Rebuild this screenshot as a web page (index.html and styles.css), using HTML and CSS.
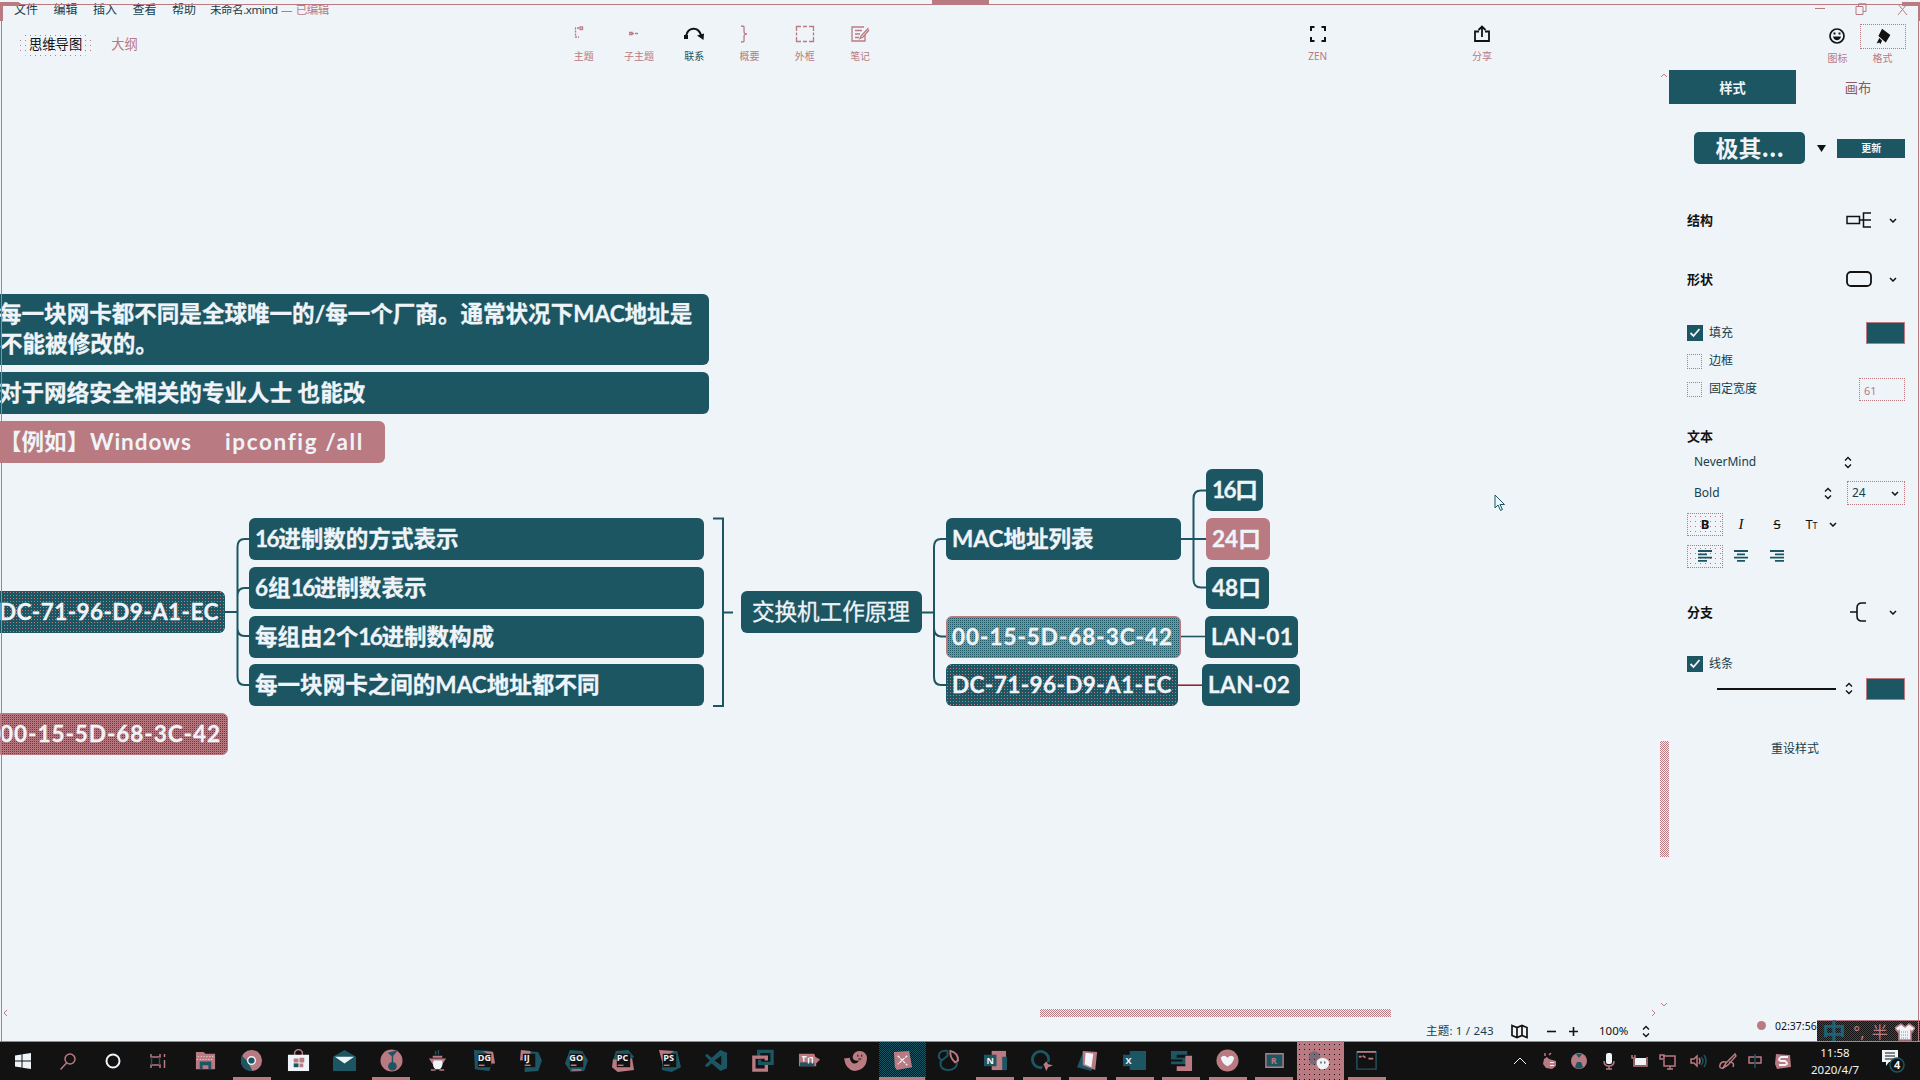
FILE: index.html
```html
<!DOCTYPE html>
<html lang="zh-CN">
<head>
<meta charset="utf-8">
<title>未命名.xmind</title>
<link rel="stylesheet" href="styles.css">
</head>
<body>
<svg class="defs" width="0" height="0">
  <defs>
    <symbol id="chev" viewBox="0 0 8 5"><path d="M1 1l3 3 3-3" fill="none" stroke="#121212" stroke-width="1.5"/></symbol>
    <symbol id="updown" viewBox="0 0 8 13"><path d="M1 4.5l3-3 3 3M1 8.5l3 3 3-3" fill="none" stroke="#121212" stroke-width="1.4"/></symbol>
    <symbol id="check" viewBox="0 0 16 16"><path d="M3.5 8l3 3 6-7" fill="none" stroke="#eff4f9" stroke-width="1.8"/></symbol>
  </defs>
</svg>

<header class="menubar">
  <nav class="menus"><span>文件</span><span>编辑</span><span>插入</span><span>查看</span><span>帮助</span></nav>
  <div class="doc">未命名.xmind <em>— 已编辑</em></div>
  <div class="winbtns">
    <svg width="10" height="10" viewBox="0 0 10 10"><path d="M0 4.500h10"/></svg>
    <svg width="12" height="12" viewBox="0 0 12 12"><path d="M1 3.500h7v8H1zM3.500 3V.8H11v7.700H8"/></svg>
    <svg width="11" height="11" viewBox="0 0 11 11"><path d="M1 0l9 11M10 0L1 11"/></svg>
  </div>
</header>

<div class="toolbar">
  <div class="views"><span class="view on">思维导图</span><span class="view">大纲</span></div>
  <div class="tools">
    <div class="tool"><svg class="g1" width="20" height="18" viewBox="0 0 20 18"><path d="M5 3H1.500v9H5" stroke-dasharray="2 1"/><rect x="6" y="2" width="2.500" height="2.500"/></svg>主题</div>
    <div class="tool"><svg width="20" height="18" viewBox="0 0 20 18"><path d="M0 7.500h3v2H0zM3 8.500h2M6 8.500h3"/></svg>子主题</div>
    <div class="tool live"><svg width="22" height="18" viewBox="0 0 22 18"><path d="M3 11C5 2 15 1 18 10" stroke-width="2"/><path class="f" d="M1 10h4v4H1zM14 10.500l7-2-.500 6.500z"/></svg>联系</div>
    <div class="tool"><svg width="20" height="18" viewBox="0 0 20 18"><path d="M1 1c4 0 3 1 3 4s0 4 3 4c-3 0-3 1-3 4s1 4-3 4"/></svg>概要</div>
    <div class="tool"><svg width="20" height="18" viewBox="0 0 20 18"><path d="M1.500 6V1.500H6M8 1.500h4M14 1.500h4.500V6M18.500 7.500v3M18.500 12v4.500H14M12 16.500H8M6 16.500H1.500V12M1.500 10.500v-3"/></svg>外框</div>
    <div class="tool"><svg width="20" height="18" viewBox="0 0 20 18"><path d="M14 2H2v14h13v-6M5 5.500h7M5 9h5M5 12.500h4M18.500 3L11 11l-1 2.500 3-1.500 6-7"/></svg>笔记</div>
  </div>
  <div class="tool zen"><svg width="18" height="18" viewBox="0 0 18 18"><path d="M2 6V2h3.500M12.500 2H16v4M16 12v4h-3.500M5.500 16H2v-4" stroke-width="2"/></svg>ZEN</div>
  <div class="tool share"><svg width="18" height="18" viewBox="0 0 18 18"><path d="M6 6.500H2V16h14V6.500h-4" stroke-width="1.800"/><path d="M9 12V2M5.500 5L9 1.500 12.500 5" stroke-width="1.800"/></svg>分享</div>
  <div class="tool emo"><svg width="18" height="18" viewBox="0 0 18 18"><circle cx="8" cy="9" r="7" stroke-width="1.700"/><path class="f" d="M4.500 5.500h2v2h-2zM9.500 5.500h2v2h-2zM4 9.500h8c-1 5-7 5-8 0z"/></svg>图标</div>
  <div class="tool fmt"><svg width="46" height="25" viewBox="0 0 46 25"><path class="f" d="M22 4l9 7-5 8-8-7zM19 14l3 3-2 4-1-2-3 1z"/></svg>格式</div>
</div>

<main>
  <section class="canvas">
    <svg class="links" width="1669" height="952" viewBox="0 68 1669 952">
      <g fill="none" stroke="#1c5663" stroke-width="2">
        <path d="M224 612h13M249.500 539h-5q-7 0-7 8v130q0 8 7 8h5M237.500 596q0-8 7-8h5M237.500 628q0 8 7 8h5"/>
        <path d="M713 518.500h10v187.500h-10M723 612.500h10"/>
        <path d="M921 612.500h13M946 539h-5q-7 0-7 8v130q0 8 7 8h5M934 628q0 8 7 8.500h5"/>
        <path d="M1181 539h25M1206 490.500h-5q-7.500 0-7.500 8v81q0 8 7.500 8h5"/>
      </g>
      <g fill="none" stroke="#ba7a82" stroke-width="2"><path d="M1181 636.500h24M1178 685h24"/></g>
      <path d="M1181 636.500h24M1178 685.500h24" stroke="#1c5663"/>
    </svg>
    <div class="node big" style="left:0;top:226px;width:709px;height:71px">每一块网卡都不同是全球唯一的/每一个厂商。通常状况下MAC地址是<br>不能被修改的。</div>
    <div class="node edge" style="left:0;top:304px;width:709px">对于网络安全相关的专业人士 也能改</div>
    <div class="node edge pink eg" style="left:0;top:353px;width:385px"><span class="w0">【例如】</span><span class="w1">Windows</span><span class="w2">ipconfig /all</span></div>
    <div class="node edge dots" style="left:0;top:523px;width:225px">DC-71-96-D9-A1-EC</div>
    <div class="node edge mesh" style="left:0;top:645px;width:228px">00-15-5D-68-3C-42</div>
    <div class="node" style="left:249px;top:450px;width:455px"><i>16</i>进制数的方式表示</div>
    <div class="node" style="left:249px;top:499px;width:455px">6组<i>16</i>进制数表示</div>
    <div class="node" style="left:249px;top:548px;width:455px">每组由2个<i>16</i>进制数构成</div>
    <div class="node" style="left:249px;top:596px;width:455px">每一块网卡之间的MAC地址都不同</div>
    <div class="node sum" style="left:741px;top:523px;width:181px">交换机工作原理</div>
    <div class="node" style="left:946px;top:450px;width:235px">MAC地址列表</div>
    <div class="node mesh" style="left:946px;top:548px;width:235px">00-15-5D-68-3C-42</div>
    <div class="node dots" style="left:946px;top:596px;width:232px">DC-71-96-D9-A1-EC</div>
    <div class="node" style="left:1206px;top:401px;width:57px"><i>16</i>口</div>
    <div class="node pink" style="left:1206px;top:450px;width:64px">24口</div>
    <div class="node" style="left:1206px;top:499px;width:63px">48口</div>
    <div class="node lan" style="left:1205px;top:548px;width:93px">LAN-01</div>
    <div class="node lan" style="left:1202px;top:596px;width:98px">LAN-02</div>
    <div class="vbar"></div><div class="hbar"></div>
    <svg class="arrows" width="1669" height="952" viewBox="0 68 1669 952" fill="none" stroke="#ba7a82"><path d="M7 1010l-3 3 3 3M1652 1010l3 3-3 3M1661 1003l3 3 3-3M1661 77l3-3 3 3"/></svg>
    <svg class="cursor" width="12" height="18" viewBox="0 0 12 18"><path d="M1 1v13l3-3 2.500 5.500 2-1L6 10.500h4.500z" fill="#eff4f9" stroke="#1c5663"/></svg>
  </section>

  <aside class="panel">
    <div class="tabs"><div class="tab on">样式</div><div class="tab">画布</div></div>
    <div class="row preset"><div class="chip">极其...</div><svg class="tri" width="9" height="7" viewBox="0 0 9 7"><path d="M0 0h9L4.500 7z" fill="#121212"/></svg><div class="update">更新</div></div>
    <div class="row struct"><b>结构</b><svg class="r" width="26" height="18" viewBox="0 0 26 18" fill="none" stroke="#121212" stroke-width="1.500"><path d="M1 5.500h12.500v7H1zM13.500 9H25M25 2h-7.500v14H25"/></svg><svg class="ch" width="8" height="5"><use href="#chev"/></svg></div>
    <div class="row shape"><b>形状</b><svg class="r" width="26" height="16" viewBox="0 0 26 16"><rect x="1" y="1" width="24" height="14" rx="4" fill="none" stroke="#121212" stroke-width="1.800"/></svg><svg class="ch" width="8" height="5"><use href="#chev"/></svg></div>
    <div class="row fill"><span class="cb on"><svg width="16" height="16"><use href="#check"/></svg></span>填充<span class="sw"></span></div>
    <div class="row near"><span class="cb"></span>边框</div>
    <div class="row near"><span class="cb"></span>固定宽度<span class="num">61</span></div>
    <div class="row texth"><b>文本</b></div>
    <div class="row font"><span>NeverMind</span><svg class="ud far" width="8" height="13"><use href="#updown"/></svg></div>
    <div class="row weight"><span>Bold</span><svg class="ud" width="8" height="13"><use href="#updown"/></svg><span class="size">24<svg width="8" height="5"><use href="#chev"/></svg></span></div>
    <div class="row btns"><span class="bt on"><b>B</b></span><span class="bt it">I</span><span class="bt"><s>S</s></span><span class="bt tt">T<small>T</small></span><svg class="ttc" width="8" height="5"><use href="#chev"/></svg></div>
    <div class="row btns al"><span class="bt on"><svg width="14" height="12" viewBox="0 0 14 12"><path d="M0 1h14M0 4.300h9M0 7.600h14M0 10.800h9"/></svg></span><span class="bt"><svg width="14" height="12" viewBox="0 0 14 12"><path d="M0 1h14M3 4.300h8M0 7.600h14M3 10.800h8"/></svg></span><span class="bt"><svg width="14" height="12" viewBox="0 0 14 12"><path d="M0 1h14M5 4.300h9M0 7.600h14M5 10.800h9"/></svg></span></div>
    <div class="row branch"><b>分支</b><svg class="r" width="17" height="20" viewBox="0 0 17 20"><path d="M0 10h7M16 1h-4q-5 0-5 5v8q0 5 5 5h4" fill="none" stroke="#121212" stroke-width="1.600"/></svg><svg class="ch" width="8" height="5"><use href="#chev"/></svg></div>
    <div class="row line"><span class="cb on"><svg width="16" height="16"><use href="#check"/></svg></span>线条</div>
    <div class="row stroke"><span class="rule"></span><svg width="8" height="13"><use href="#updown"/></svg><span class="sw dk"></span></div>
    <div class="row reset">重设样式</div>
  </aside>
</main>

<footer class="status">
  <span class="count">主题: 1 / 243</span>
  <svg class="map" width="17" height="15" viewBox="0 0 17 15" fill="none" stroke="#121212" stroke-width="1.700"><path d="M1 1.500l5 2 5-2 5 2v10l-5-2-5 2-5-2zM6 3.500v10M11 1.500v10"/></svg>
  <svg class="minus" width="9" height="9" viewBox="0 0 9 9"><path d="M0 4.500h9" stroke="#121212" stroke-width="1.600"/></svg>
  <svg class="plus" width="9" height="9" viewBox="0 0 9 9"><path d="M0 4.500h9M4.500 0v9" stroke="#121212" stroke-width="1.600"/></svg>
  <span class="pct">100%</span>
  <svg class="zud" width="8" height="13"><use href="#updown"/></svg>
  <span class="rec"></span><span class="time">02:37:56</span>
  <div class="ime"><b>中</b><span>°,</span><span>半</span><svg width="20" height="18" viewBox="0 0 20 18"><path d="M6 1l4 3 4-3 6 4-3 4-1-1v9H4V8L3 9 0 5z" fill="#eff4f9" stroke="#ba7a82" stroke-width="1.500"/><path d="M6 9h8M6 12h8M6 15h8" stroke="#ba7a82" stroke-dasharray="1 1"/></svg></div>
</footer>

<div class="taskbar">
  <div class="sys"><svg width="16" height="16" viewBox="0 0 16 16"><path class="l" d="M0 2.500L6.500 1.500v6H0zM7.500 1.300L16 0v7.500H7.500zM0 8.500h6.500v6L0 13.500zM7.500 8.500H16V16l-8.500-1.300z"/></svg></div>
  <div class="sys"><svg width="16" height="17" viewBox="0 0 16 17"><circle cx="10" cy="6" r="5" class="sp"/><path class="sp" d="M6.500 10L.5 16.500"/></svg></div>
  <div class="sys"><svg width="16" height="16" viewBox="0 0 16 16"><circle cx="8" cy="8" r="6.500" fill="none" stroke="#eff4f9" stroke-width="2"/></svg></div>
  <div class="sys"><svg width="16" height="16" viewBox="0 0 16 16"><path class="sp" d="M1 1v3h9V1M1 15v-3h9v3M14.500 1v3M14.500 7v8"/><path class="st" d="M1.500 4v8M9.500 4v8"/></svg></div>
  <div class="app first"><svg viewBox="0 0 24 24"><path class="p" d="M2 3h8l2 2h10v16H2z"/><path class="t" d="M6 13h12v8h-3v-4H9v4H6z"/><path d="M4 8h18M3 11h18" stroke="#eff4f9" stroke-dasharray="1 2"/></svg></div>
  <div class="app run"><svg viewBox="0 0 24 24"><circle cx="12" cy="12" r="11" class="p"/><path class="t" d="M2 7l6 6 5 10C3 23-1 15 2 7z"/><circle cx="12" cy="12" r="4" class="t" stroke="#eff4f9" stroke-width="1.500"/></svg></div>
  <div class="app"><svg viewBox="0 0 24 24"><path class="sp" d="M8 7V3q4-5 8 0v4"/><path class="l" d="M1 6h22v17H1z"/><path class="p" d="M7 10h5v4H7zM13 9h5v5h-5zM13 15h4v4h-4z"/><path class="t" d="M7 15h5v4H7z"/></svg></div>
  <div class="app"><svg viewBox="0 0 24 24"><path class="t" d="M0 8L12 1l12 7v15H0z"/><path class="l" d="M2 8h20l-10 7z"/></svg></div>
  <div class="app run"><svg viewBox="0 0 24 24"><circle cx="12" cy="12" r="11.500" class="p"/><path class="t" d="M8 4l11-3-6 7z"/><path d="M13 7v8" stroke="#1c5663" stroke-width="1.500"/><circle cx="13" cy="18" r="4.500" class="t"/></svg></div>
  <div class="app"><svg viewBox="0 0 24 24"><path class="st" d="M10 2v4M13 1v5"/><path class="p" d="M7 7h10v2H7zM3 10h18l-4 6H7z"/><path class="l" d="M8 12h9q1 8-3 9h-4q-4-2-2-9z"/><path class="sp" d="M5 22h5M14 22h5"/></svg></div>
  <div class="app"><svg viewBox="0 0 24 24"><path class="t" d="M1 1l19 1v13l-3 8L2 21z"/><path class="p" d="M10 2l11 1 2 12h-5L17 6z"/><path class="k" d="M5 5h14v14H5z"/><text x="5" y="13">DG</text><path class="sp" d="M6 17h6"/></svg></div>
  <div class="app"><svg viewBox="0 0 24 24"><path class="t" d="M5 2l15 1 4 9-4 11-14 1z"/><path class="p" d="M2 1l10 1v9L1 12z"/><path class="k" d="M4 5h13v14H4z"/><text x="5" y="13">IJ</text><path class="sp" d="M6 17h6"/></svg></div>
  <div class="app"><svg viewBox="0 0 24 24"><path class="t" d="M5 1l13 1 6 10-4 11-14 1-6-9z"/><path class="k" d="M5 5h14v14H5z"/><text x="4.500" y="13">GO</text><path class="sp" d="M6 17h6M7 22h10"/></svg></div>
  <div class="app"><svg viewBox="0 0 24 24"><path class="t" d="M4 2l13-1 6 7-5 5L1 12z"/><path class="p" d="M1 11l20-1 2 12-17 2-6-5z"/><path class="k" d="M5 5h14v14H5z"/><text x="5" y="13">PC</text><path class="sp" d="M6 17h6"/></svg></div>
  <div class="app"><svg viewBox="0 0 24 24"><path class="t" d="M5 3l15-1 4 17-10 5-10-2z"/><path class="p" d="M1 1l16 1-8 5-4 9z"/><path class="k" d="M5 5h14v14H5z"/><text x="5.500" y="13">PS</text><path class="sp" d="M6 17h6"/></svg></div>
  <div class="app"><svg viewBox="0 0 24 24"><path class="t" d="M16 1l7 3v16l-7 3-9-8-5 4-2-2 5-5-5-5 2-2 5 4zM17 7l-7 5 7 5z" fill-rule="evenodd"/></svg></div>
  <div class="app"><svg viewBox="0 0 24 24" fill="none" stroke-width="3.500"><path stroke="#ba7a82" d="M9 8.500H3V22h13v-6"/><path stroke="#1c5663" d="M8 7V2.500h14v12.500H9v-4"/><path stroke="#ba7a82" d="M7 8.500h9V12"/></svg></div>
  <div class="app"><svg viewBox="0 0 24 24"><path class="p" d="M1 5h16l1 3 5 3-4 4v3H1z"/><path class="t" d="M2 14h15v4H2z"/><path d="M4 8h5M6 8v5M11 9v6M12 9h3v6" fill="none" stroke="#eff4f9" stroke-width="1.500"/></svg></div>
  <div class="app"><svg viewBox="0 0 24 24"><path class="p" d="M0 10l6-1q1 6 5 6 3 0 5-3-7 1-7-4 1-6 8-6 7 1 7 8-1 12-13 13Q2 22 0 10z"/><path class="k" d="M14 6h1v2h-1zM18 6h1v2h-1zM15 10h3v1h-3z"/></svg></div>
  <div class="app run act"><svg viewBox="0 0 24 24"><path class="p" d="M3 3l16-1 3 17-16 3L4 19z"/><path d="M7 7l10 10M17 7L7 16" fill="none" stroke="#eff4f9" stroke-width="1.300" stroke-dasharray="3 1"/></svg></div>
  <div class="app"><svg viewBox="0 0 24 24" fill="none" stroke-width="2"><path stroke="#1c5663" d="M11 2Q1 1 2 9l3 3 6-5zM4 12q-2 10 8 10 9-1 9-8"/><path stroke="#ba7a82" d="M14 2q8 2 8 10l-3 2q-6-5-5-12z"/></svg></div>
  <div class="app run"><svg viewBox="0 0 24 24"><path class="p" d="M8 2h15v20H8z"/><path class="t" d="M19 8h5v14h-5zM0 6h13v12H0z"/><text x="2.500" y="15.500">N</text></svg></div>
  <div class="app run"><svg viewBox="0 0 24 24"><circle cx="11" cy="11" r="8.500" fill="none" stroke="#1c5663" stroke-width="3"/><path class="k" d="M13 14h11v10H13z"/><path class="p" d="M14 16l3-3 2 3 5 1-5 2-2 4z"/></svg></div>
  <div class="app run"><svg viewBox="0 0 24 24"><path class="t" d="M6 4L0 19l15 4 5-14z"/><path class="p" d="M6 2l15 1-2 19-13-5z"/><path class="l" d="M9 4l8 1-2 14-7-3z"/></svg></div>
  <div class="app run"><svg viewBox="0 0 24 24"><path class="t" d="M7 2h17v20H7zM0 6h13v12H0z"/><text x="2.500" y="15.500">X</text></svg></div>
  <div class="app run"><svg viewBox="0 0 24 24"><path class="t" d="M1 2h17v4H7v3h11v7H1v-3h12v-2H1z"/><path class="p" d="M16 7h7v16H7v-5h9z"/></svg></div>
  <div class="app run"><svg viewBox="0 0 24 24"><circle cx="12" cy="12" r="11.500" class="p"/><path class="l" d="M5 9q3-4 7 0 4-4 7 0-1 6-7 9-6-3-7-9z"/></svg></div>
  <div class="app run"><svg viewBox="0 0 24 24"><path class="t" d="M3 5h18v14H3z" stroke="#ba7a82" stroke-width="1.500"/><text class="pt" x="8" y="15.500">R</text></svg></div>
  <div class="app act pk"><svg viewBox="0 0 24 24"><path d="M0 5q5-6 11 0l1 6-6 6-4-1q-4-5-2-11z" fill="#1c5663" fill-opacity=".4"/><path class="l" d="M8 15q-1-5 6-6 7 1 7 6-1 6-7 6-5 0-6-6z"/><path class="k" d="M12 13h1v2h-1zM16 13h1v2h-1z"/></svg></div>
  <div class="app run"><svg viewBox="0 0 24 24"><path d="M2 3h20v18H2z" fill="none" stroke="#1c5663" stroke-width="1.500"/><path d="M2 3h20M4 8h3M8 7l3 2M14 10h5" fill="none" stroke="#ba7a82" stroke-width="1.800"/></svg></div>

  <div class="tray">
    <svg viewBox="0 0 18 18"><path d="M3 12l6-6 6 6" fill="none" stroke="#eff4f9"/></svg>
    <svg viewBox="0 0 18 18"><path class="p" d="M3 7l3-2 2 2 7 2v5l-4 3-6-1-3-4z"/><path class="sp" d="M4 1v3M8 3l2-2"/><path class="l" d="M9 10h4v1H9zM9 13h4v1H9z"/></svg>
    <svg viewBox="0 0 18 18"><circle class="p" cx="9" cy="9" r="8"/><path class="t" d="M6 2h6l-3 4zM7 10h4l2 5q-4 3-8 0z"/></svg>
    <svg viewBox="0 0 18 18"><rect class="l" x="6" y="1" width="6" height="11" rx="2"/><path class="sp" d="M4 9q0 5 5 5t5-5M9 14v3M6 17h6"/></svg>
    <svg viewBox="0 0 18 18"><path class="l" d="M5 6h11v7H5z"/><path class="sp" d="M2 3v3h3V3M4 7v7h13V5"/></svg>
    <svg viewBox="0 0 18 18"><path class="sp" d="M4 4h12v10H5V8M1 3h4v4H1zM8 17h6M11 14v3"/></svg>
    <svg viewBox="0 0 18 18"><path class="sp" d="M2 7h3l3-3v10l-3-3H2z"/><path class="sp" d="M10 6q2 3 0 6"/><path class="st" d="M12 5q4 4 0 8M15 3q4 6 0 12"/></svg>
    <svg viewBox="0 0 18 18"><path class="sp" d="M16 2l-9 9-3 5 5-3 8-9zM7 10q-5-1-6 3t4 3M10 10q6 0 4 5"/></svg>
    <svg viewBox="0 0 18 18" class="zh"><path class="sp" d="M3 5h12v6H3z"/><path class="st" d="M9 2v14"/></svg>
    <svg viewBox="0 0 18 18"><path class="p" d="M2 2l14 1 1 12-14 2-2-5z"/><path d="M14 5H7q-4 3 0 4h4q4 3 0 4H5" fill="none" stroke="#eff4f9" stroke-width="2"/></svg>
  </div>
  <div class="clock"><span>11:58</span><span>2020/4/7</span></div>
  <svg class="notif" width="26" height="24" viewBox="0 0 26 24"><path class="l" d="M1 1h16v12H8l-3 4v-4H1z"/><path d="M4 4h10M4 7h10M4 10h8" stroke="#121212"/><circle cx="16" cy="16" r="7" fill="#121212" stroke="#1c5663" stroke-width="1.500"/><text x="13" y="20">4</text></svg>
</div>

<div class="frame"><i class="tl"></i><i class="tr"></i><i class="tab-top"></i></div>
</body>
</html>
```

FILE: styles.css
```css
:root {
  --bg: #eff4f9;
  --teal: #1c5663;
  --pink: #ba7a82;
  --ink: #121212;
}
* { box-sizing: border-box; }
body {
  margin: 0;
  width: 1920px;
  height: 1080px;
  overflow: hidden;
  position: relative;
  display: flex;
  flex-direction: column;
  background: var(--bg);
  color: #16404a;
  font: 12px/16px "Noto Sans", "Noto Sans CJK SC", sans-serif;
}
.defs { position: absolute; }
svg { display: block; flex: none; }
i { font-style: normal; }

.menubar { height: 20px; flex: none; display: flex; padding: 2px 12px 0 14px; }
.menus { display: flex; gap: 15.500px; width: 196px; }
.doc { width: 400px; font-size: 11.500px; letter-spacing: -0.450px; word-spacing: 1px; }
.doc em { font-style: normal; color: var(--pink); }
.winbtns { margin-left: auto; display: flex; align-items: center; gap: 30px; height: 14px; }
.winbtns svg { fill: none; stroke: var(--pink); }

.toolbar { height: 48px; flex: none; display: flex; font-size: 10px; }
.views { width: 556px; padding: 13px 0 0 18px; display: flex; align-items: flex-start; gap: 7px; font-size: 13.300px; line-height: 22px; }
.view { height: 23px; padding: 0 11px; color: var(--pink); }
.view.on {
  color: var(--ink);
  border-radius: 11px;
  background: radial-gradient(circle, var(--pink) 0.500px, transparent 0.600px) 0 0 / 5px 5px;
}
.tools { display: flex; width: 332px; }
.tool { width: 55.300px; flex: none; display: flex; flex-direction: column; align-items: center; gap: 5px; padding-top: 5px; line-height: 17px; color: var(--pink); }
.tool svg { fill: none; stroke: var(--pink); stroke-width: 1.300; }
.tool.live { color: var(--teal); }
.live svg, .zen svg, .share svg, .emo svg, .fmt svg { stroke: var(--ink); }
.tool .f { fill: var(--ink); stroke: none; }
.zen { margin-left: 402px; }
.share { margin-left: 109px; }
.emo { margin-left: 301px; padding-top: 7px; gap: 5px; width: 54px; }
.fmt { width: 46px; margin-left: -5px; padding-top: 4px; gap: 1px; }
.fmt svg { background: radial-gradient(circle, var(--pink) 0.500px, transparent 0.600px) 0 0 / 4px 4px; border: 1px dotted var(--pink); }

main { height: 952px; flex: none; display: grid; grid-template-columns: 1669px 251px; }
.canvas { position: relative; overflow: hidden; }
.links, .arrows { position: absolute; left: 0; top: 0; }
.cursor { position: absolute; left: 1494px; top: 426px; }
.node {
  position: absolute;
  height: 42px;
  padding: 0 6px;
  border-radius: 6px;
  background-color: var(--teal);
  color: var(--bg);
  font: bold 22.560px/41px Lato, "Noto Sans CJK SC", sans-serif;
  -webkit-text-stroke: 0.300px var(--bg);
  white-space: nowrap;
}
.node i { letter-spacing: -1.500px; }
.node.big { padding: 5px 0; line-height: 30px; border-radius: 0 6px 6px 0; text-indent: -1px; }
.node.edge { padding-left: 0; border-radius: 0 6px 6px 0; text-indent: -1px; }
.node.pink { background-color: var(--pink); }
.node.dots { background-image: radial-gradient(circle, var(--pink) 0.600px, transparent 0.700px); background-size: 3px 3px; letter-spacing: 0.400px; }
.node.mesh {
  background: conic-gradient(var(--pink) 25%, var(--teal) 0 50%, var(--pink) 0 75%, #a3717a 0) 0 0 / 2px 2px;
  letter-spacing: 0.950px;
  border: 1px solid var(--pink);
  line-height: 39px;
  padding-left: 5px;
}
.node.mesh.edge { padding-left: 0; }
.node.lan { letter-spacing: 0.500px; }
.node.sum { padding-left: 11px; font-weight: 400; }
.node.eg { display: flex; -webkit-text-stroke: 0; }
.eg .w0 { width: 91px; }
.eg .w1 { width: 135px; letter-spacing: 0.900px; }
.eg .w2 { letter-spacing: 1.600px; font-variant-ligatures: none; }
.vbar, .hbar { position: absolute; background: conic-gradient(var(--pink) 25%, var(--bg) 0 50%, var(--pink) 0 75%, var(--bg) 0) 0 0 / 2px 2px; }
.vbar { left: 1660px; top: 673px; width: 9px; height: 116px; }
.hbar { left: 1040px; top: 941px; width: 351px; height: 8px; }

.panel { padding-top: 2px; display: flex; flex-direction: column; }
.tabs { display: flex; height: 34px; font-size: 13.300px; line-height: 36px; text-align: center; }
.tab { width: 124px; color: #8a5a64; }
.tab.on { width: 127px; color: var(--bg); font-weight: bold; background: radial-gradient(circle, var(--pink) 0.500px, transparent 0.600px) 0 0 / 4px 4px var(--teal); }
.row { display: flex; align-items: center; height: 24px; margin: 0 15px 0 18px; flex: none; }
.row b { color: var(--ink); font-size: 13px; }
.preset { height: 34px; margin: 27px 15px 0 25px; }
.chip { width: 112px; height: 32px; border-radius: 5px; background: var(--teal); color: var(--bg); font: bold 23px/31px "Noto Sans CJK SC", sans-serif; text-align: center; }
.tri { margin: 0 11px 0 12px; }
.update { width: 68px; height: 19px; color: var(--bg); font-size: 10px; font-weight: bold; line-height: 19px; text-align: center; background: radial-gradient(circle, var(--pink) 0.500px, transparent 0.600px) 0 0 / 4px 4px var(--teal); }
.r { margin-left: auto; }
.ch { margin: 0 8px 0 17px; }
.struct { height: 30px; margin-top: 40px; }
.shape { height: 30px; margin-top: 29px; }
.fill { margin-top: 27px; }
.near { margin-top: 4px; }
.cb { width: 15px; height: 15px; margin-right: 7px; border: 1px dotted var(--pink); }
.cb.on { width: 16px; height: 16px; margin-right: 6px; border: 0; background: radial-gradient(circle, var(--pink) 0.500px, transparent 0.600px) 0 0 / 4px 4px var(--teal); }
.sw { width: 39px; height: 22px; margin-left: auto; background: var(--teal); border: 1px solid var(--pink); }
.num { width: 46px; height: 23px; margin-left: auto; padding-left: 4px; border: 1px dotted var(--pink); color: var(--pink); line-height: 23px; font-size: 11px; }
.texth { margin-top: 23px; }
.font { margin-top: 2px; padding-left: 7px; }
.ud { margin-left: auto; margin-right: 15px; }
.ud.far { margin-right: 53px; }
.weight { margin-top: 7px; padding-left: 7px; }
.size { width: 58px; height: 24px; padding: 0 5px 0 4px; border: 1px dotted var(--pink); display: flex; align-items: center; justify-content: space-between; }
.btns { margin-top: 7px; }
.bt { width: 36px; height: 23px; margin-right: 0; display: flex; align-items: center; justify-content: center; color: var(--ink); font-size: 13px; }
.bt.on { border: 1px dotted var(--pink); background: radial-gradient(circle, var(--pink) 0.500px, transparent 0.600px) 0 0 / 5px 5px; }
.bt svg { stroke: var(--teal); stroke-width: 1.800; }
.it { font-family: "Liberation Serif", serif; font-style: italic; font-size: 15px; }
.al { margin-top: 8px; }
.tt { padding-right: 3px; }
.tt small { font-size: 9px; padding-top: 3px; }
.ttc { margin-left: -2px; }
.bt s { padding: 0 2px; }
.branch { margin-top: 32px; }
.branch .ch { margin-left: 22px; }
.line { margin-top: 28px; }
.stroke { height: 23px; margin-top: 1px; padding-left: 30px; }
.rule { width: 119px; height: 2px; margin-right: 9px; background: var(--ink); }
.reset { margin-top: 37px; padding-left: 84px; }

.status { height: 22px; flex: none; display: flex; align-items: center; padding-left: 1426px; line-height: 22px; color: var(--ink); font-size: 11.500px; }
.count { width: 85px; white-space: nowrap; letter-spacing: 0.200px; color: #16404a; }
.minus { margin-left: 19px; }
.plus { margin-left: 13px; }
.pct { width: 43px; margin-left: 21px; white-space: nowrap; }
.rec { width: 9px; height: 9px; margin: -11px 0 0 107px; border-radius: 50%; background: var(--pink); }
.time { width: 51px; margin: -11px -9px 0 9px; font-size: 10.500px; white-space: nowrap; }
.ime { width: 103px; height: 22px; margin-left: auto; padding: 0 5px; display: flex; align-items: center; justify-content: space-between; border-top: 1px solid var(--pink); color: var(--pink); font-size: 16px; background: conic-gradient(var(--teal) 25%, var(--ink) 0 50%, var(--teal) 0 75%, var(--ink) 0) 0 0 / 2px 2px; }
.ime b { color: #1c6374; font-size: 24px; }

.taskbar { height: 38px; flex: none; display: flex; align-items: center; background: var(--ink); color: var(--bg); box-shadow: 0 -1px var(--pink); }
.sys { width: 45px; flex: none; display: flex; justify-content: center; }
.app { width: 46.480px; height: 38px; flex: none; display: flex; align-items: center; justify-content: center; border-bottom: 3px solid transparent; padding-top: 2px; }
.app.first { margin-left: 2px; }
.app svg { width: 23px; height: 23px; }
.app.run { background: linear-gradient(var(--pink), var(--pink)) 50% 100% / 38px 3px no-repeat border-box; }
.app.run.act { background: linear-gradient(var(--pink), var(--pink)) 50% 100% / 46px 3px no-repeat border-box, conic-gradient(var(--teal) 25%, var(--ink) 0 50%, var(--teal) 0 75%, var(--ink) 0) 0 0 / 2px 2px; }
.app.pk { background: radial-gradient(circle, var(--ink) 0.500px, transparent 0.600px) 0 0 / 5px 5px var(--pink); }
.taskbar text { font: bold 9.500px "Open Sans", sans-serif; fill: var(--bg); }
.taskbar .pt { fill: var(--pink); }
.l { fill: var(--bg); }
.p { fill: var(--pink); }
.t { fill: var(--teal); }
.k { fill: var(--ink); }
.sp { fill: none; stroke: var(--pink); stroke-width: 1.500; }
.st { fill: none; stroke: var(--teal); stroke-width: 1.500; }
.tray { margin-left: auto; display: flex; align-items: center; gap: 11.700px; }
.tray svg { width: 18px; height: 18px; }
.tray .zh { margin: 0 -2px; }
.clock { width: 70px; margin-left: 8px; display: flex; flex-direction: column; align-items: center; font-size: 11.500px; line-height: 17px; }
.notif { margin: 0 13px 0 11px; }
.notif text { font-size: 11px; }

.frame { position: absolute; inset: 4px 1px 39px 1px; border: 1px solid var(--pink); border-bottom: 0; pointer-events: none; }
.frame i { position: absolute; border: 0 solid var(--pink); }
.frame .tl { left: -2px; top: -3px; width: 19px; height: 19px; border-top-width: 4px; border-left-width: 3px; }
.frame .tr { right: -2px; top: -3px; width: 18px; height: 19px; border-top-width: 4px; border-right-width: 2px; }
.frame .tab-top { left: 930px; top: -5px; width: 57px; height: 5px; background: var(--pink); }
```
